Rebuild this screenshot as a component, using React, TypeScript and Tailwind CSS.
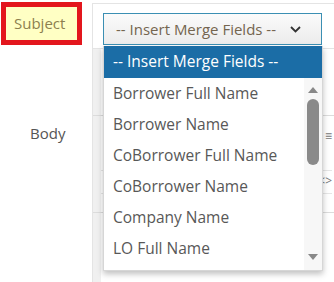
import React from 'react';

const items = [
  'Borrower Full Name',
  'Borrower Name',
  'CoBorrower Full Name',
  'CoBorrower Name',
  'Company Name',
  'LO Full Name',
];

const App: React.FC = () => {
  return (
    <div className="relative w-[334px] h-[282px] overflow-hidden bg-white font-['Open_Sans',sans-serif] text-[15.5px]">
      <div className="flex h-full">
        {/* labels */}
        <div className="w-[92px] shrink-0">
          <div className="mt-[2px] ml-[1px] w-[81px] h-[43px] border-[5px] border-[#e3161d] bg-[#ffffc4] flex items-center pl-[8px] text-[#8d7f4f] text-[15px]">
            Subject
          </div>
          <div className="mt-[77px] pl-[30px] text-[#555] text-[15px]">Body</div>
        </div>

        {/* editor panel behind the menu */}
        <div className="flex-1 mt-[3px] border-l border-t border-[#e4e4e4] flex flex-col">
          <div className="h-[44px] pl-[10px] pt-[9px]">
            <div className="w-[219px] h-[32px] border-[1.5px] border-[#3b8fb3] bg-gradient-to-b from-[#fbfbfb] to-[#ececec] flex items-center justify-between pl-[12px] pr-[20px] text-[#74654f] text-[15px]">
              <span>-- Insert Merge Fields --</span>
              <svg width="11" height="7" viewBox="0 0 11 7" fill="none">
                <path d="M1 1l4.5 4.5L10 1" stroke="#333" strokeWidth="1.8" />
              </svg>
            </div>
          </div>
          <div className="h-[67px] border-t border-[#e4e4e4] flex">
            <div className="w-[8px] bg-[#f0f0f0]" />
          </div>
          <div className="h-[97px] border-t border-[#dcdcdc] flex">
            <div className="w-[8px] bg-[#f0f0f0]" />
            <div className="flex-1 flex flex-col items-end pr-[2px] text-[#777] text-[12px] leading-none">
              <span className="mt-[14px]">≡</span>
              <div className="mt-[28px] w-full border-t border-[#e6e6e6]" />
              <span className="mt-[4px]">&lt;&gt;</span>
              <div className="mt-[6px] w-full border-t border-[#e6e6e6]" />
            </div>
          </div>
          <div className="flex-1 border-t border-[#dcdcdc] flex">
            <div className="w-[8px] bg-[#f0f0f0]" />
          </div>
        </div>
      </div>

      {/* open dropdown menu */}
      <div className="absolute left-[103px] top-[46px] w-[220px] h-[225px] bg-white shadow-[0_3px_6px_rgba(0,0,0,0.25)] border-x border-b border-[#d6d6d6]">
        <div className="h-[32px] bg-[#1b6da6] text-white flex items-center pl-[9px]">
          -- Insert Merge Fields --
        </div>
        {items.map((item) => (
          <div key={item} className="h-[31px] flex items-center pl-[9px] text-[#585858]">
            {item}
          </div>
        ))}
        <div className="absolute right-0 top-[32px] bottom-0 w-[18px] bg-[#f7f7f7] flex flex-col items-center">
          <svg className="mt-[8px] block shrink-0" width="12" height="8" viewBox="0 0 12 8">
            <path d="M6 1L11 7H1z" fill="#888" />
          </svg>
          <div className="mt-[5px] w-[12px] h-[66px] shrink-0 rounded-full bg-[#8a8a8a]" />
          <svg className="mt-auto mb-[9px] block shrink-0" width="12" height="8" viewBox="0 0 12 8">
            <path d="M1 1h10L6 7z" fill="#888" />
          </svg>
        </div>
      </div>
    </div>
  );
};

export default App;
